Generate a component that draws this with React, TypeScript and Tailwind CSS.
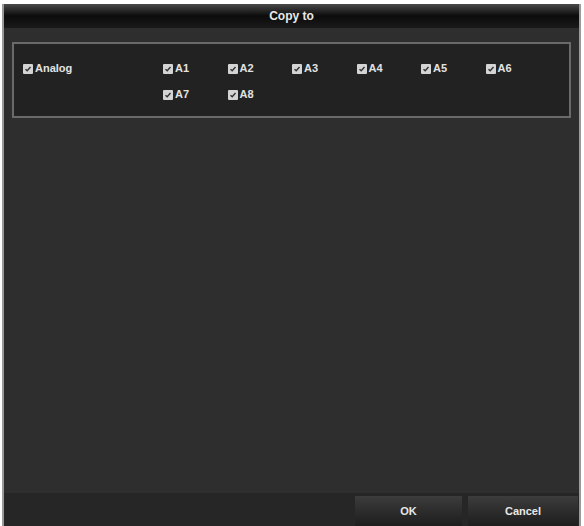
import React, { useState } from 'react';

const channels = ['A1', 'A2', 'A3', 'A4', 'A5', 'A6', 'A7', 'A8'];

const CheckBox: React.FC<{ checked: boolean; onToggle: () => void; label: string }> = ({ checked, onToggle, label }) => (
  <button onClick={onToggle} className="h-[11px] flex items-center gap-[2px] text-left">
    <span className="w-[10px] h-[10px] bg-[#d4d4d4] rounded-[1px] flex items-center justify-center">
      {checked && (
        <svg width="8" height="8" viewBox="0 0 8 8">
          <path d="M1.5 4.2 L3.2 5.8 L6.5 2" stroke="#333" strokeWidth="1.4" fill="none" />
        </svg>
      )}
    </span>
    <span className="text-[11px] font-bold text-[#e2e2e2] leading-none">{label}</span>
  </button>
);

export default function App() {
  const [analog, setAnalog] = useState(true);
  const [picked, setPicked] = useState<Record<string, boolean>>(
    Object.fromEntries(channels.map((c) => [c, true]))
  );

  return (
    <div className="w-[584px] h-[526px] bg-white pt-[4px] pl-[2px] pr-[3px] font-['Liberation_Sans',Arial,sans-serif]">
      <div className="h-full flex flex-col bg-[#2e2e2e] border-l-2 border-r-2 border-[#9a9a9a]">
        {/* title bar */}
        <div className="h-[24px] shrink-0 flex items-center justify-center bg-gradient-to-b from-[#4a4a4a] via-[#0c0c0c] to-[#1a1a1a]">
          <span className="text-[12px] font-bold text-[#e8e8e8]">Copy to</span>
        </div>

        <div className="flex-1 pt-[14px] px-[8px]">
          <div className="h-[76px] bg-[#222222] border-2 border-[#6a6a6a] pl-[9px] pt-[19px] flex items-start">
            <div className="w-[140px]">
              <CheckBox checked={analog} onToggle={() => setAnalog(!analog)} label="Analog" />
            </div>
            <div className="grid grid-cols-[repeat(6,64.5px)] content-start gap-y-[15px]">
              {channels.map((c) => (
                <CheckBox
                  key={c}
                  checked={picked[c]}
                  onToggle={() => setPicked({ ...picked, [c]: !picked[c] })}
                  label={c}
                />
              ))}
            </div>
          </div>
        </div>

        {/* footer */}
        <div className="h-[33px] shrink-0 bg-[#262626] flex justify-end items-end gap-[6px] pr-[1px]">
          <button className="w-[107px] h-[30px] bg-gradient-to-b from-[#3c3c3c] to-[#1e1e1e] text-[11px] font-bold text-[#e8e8e8]">
            OK
          </button>
          <button className="w-[110px] h-[30px] bg-gradient-to-b from-[#3c3c3c] to-[#1e1e1e] text-[11px] font-bold text-[#e8e8e8]">
            Cancel
          </button>
        </div>
      </div>
    </div>
  );
}
